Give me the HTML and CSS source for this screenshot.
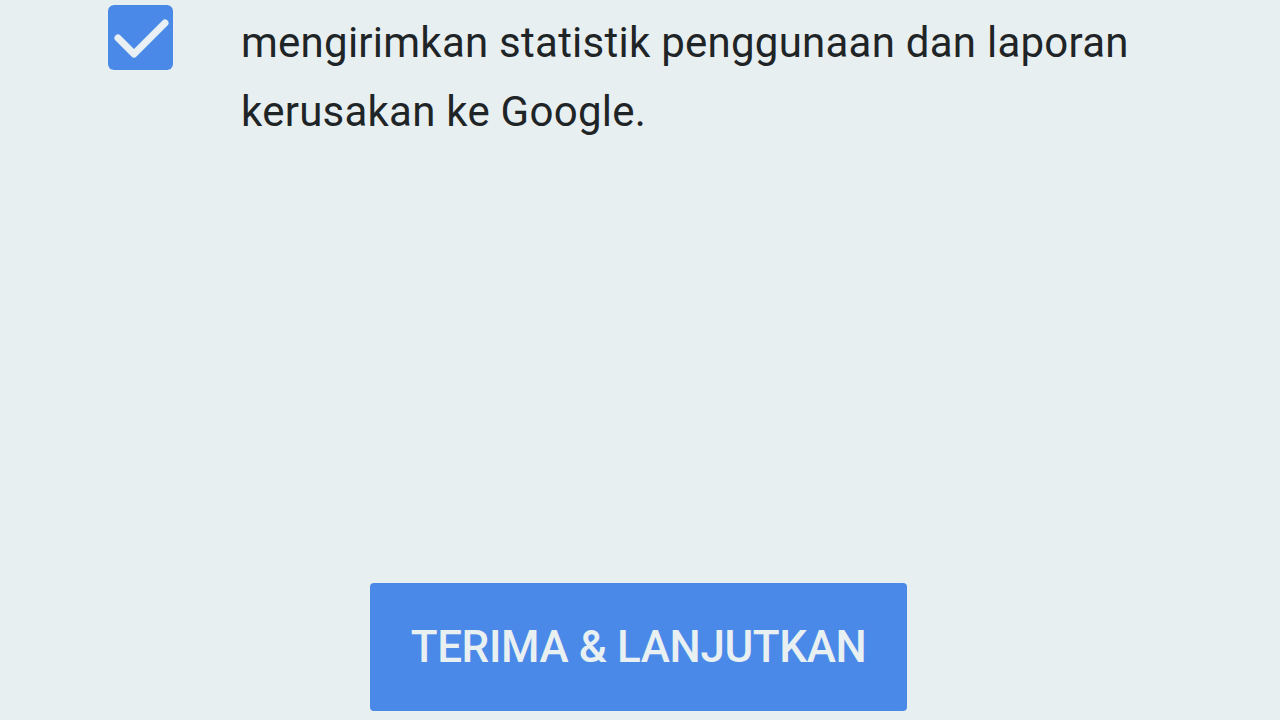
FILE: index.html
```html
<!DOCTYPE html>
<html lang="id">
<head>
    <meta charset="UTF-8">
    <meta name="viewport" content="width=device-width, initial-scale=1.0">
    <title>Persetujuan</title>
    <link rel="stylesheet" href="styles.css">
</head>
<body>

    <div class="screen">
        <label class="consent">
            <span class="checkbox">
                <svg viewBox="0 0 64 64" width="64" height="64" aria-hidden="true">
                    <path d="M9 32 L25 48 L56 17" fill="none" stroke="#e8f0f4" stroke-width="7" stroke-linecap="round" stroke-linejoin="round"/>
                </svg>
            </span>
            <span class="consent-text">mengirimkan statistik penggunaan dan laporan kerusakan ke Google.</span>
        </label>

        <div class="actions">
            <button class="accept-button">TERIMA &amp; LANJUTKAN</button>
        </div>
    </div>

</body>
</html>
```

FILE: styles.css
```css
:root {
    --bg-color: #e8eff1;
    --text-color: #1f2527;
    --blue: #4a89e8;
    --button-text: #e8f0f2;
    --font-family: Roboto, 'Noto Sans', sans-serif;
}
body {
    margin: 0;
    background-color: var(--bg-color);
    color: var(--text-color);
    font-family: var(--font-family);
}
.screen {
    height: 720px;
    display: flex;
    flex-direction: column;
    overflow: hidden;
}
.consent {
    display: flex;
    align-items: flex-start;
    padding: 5px 0 0 108px;
}
.checkbox {
    flex: none;
    width: 65px;
    height: 65px;
    border-radius: 6px;
    background-color: var(--blue);
    display: flex;
    align-items: center;
    justify-content: center;
}
.consent-text {
    width: 920px;
    margin: 3px 0 0 68px;
    font-size: 42px;
    line-height: 69px;
    letter-spacing: 0.25px;
}
.actions {
    margin-top: auto;
    padding-bottom: 9px;
    display: flex;
    justify-content: center;
}
.accept-button {
    width: 537px;
    height: 128px;
    margin-left: -3px;
    border: none;
    border-radius: 4px;
    background-color: var(--blue);
    color: var(--button-text);
    font-family: var(--font-family);
    font-size: 44px;
    font-weight: 500;
    letter-spacing: -0.4px;
}
```
